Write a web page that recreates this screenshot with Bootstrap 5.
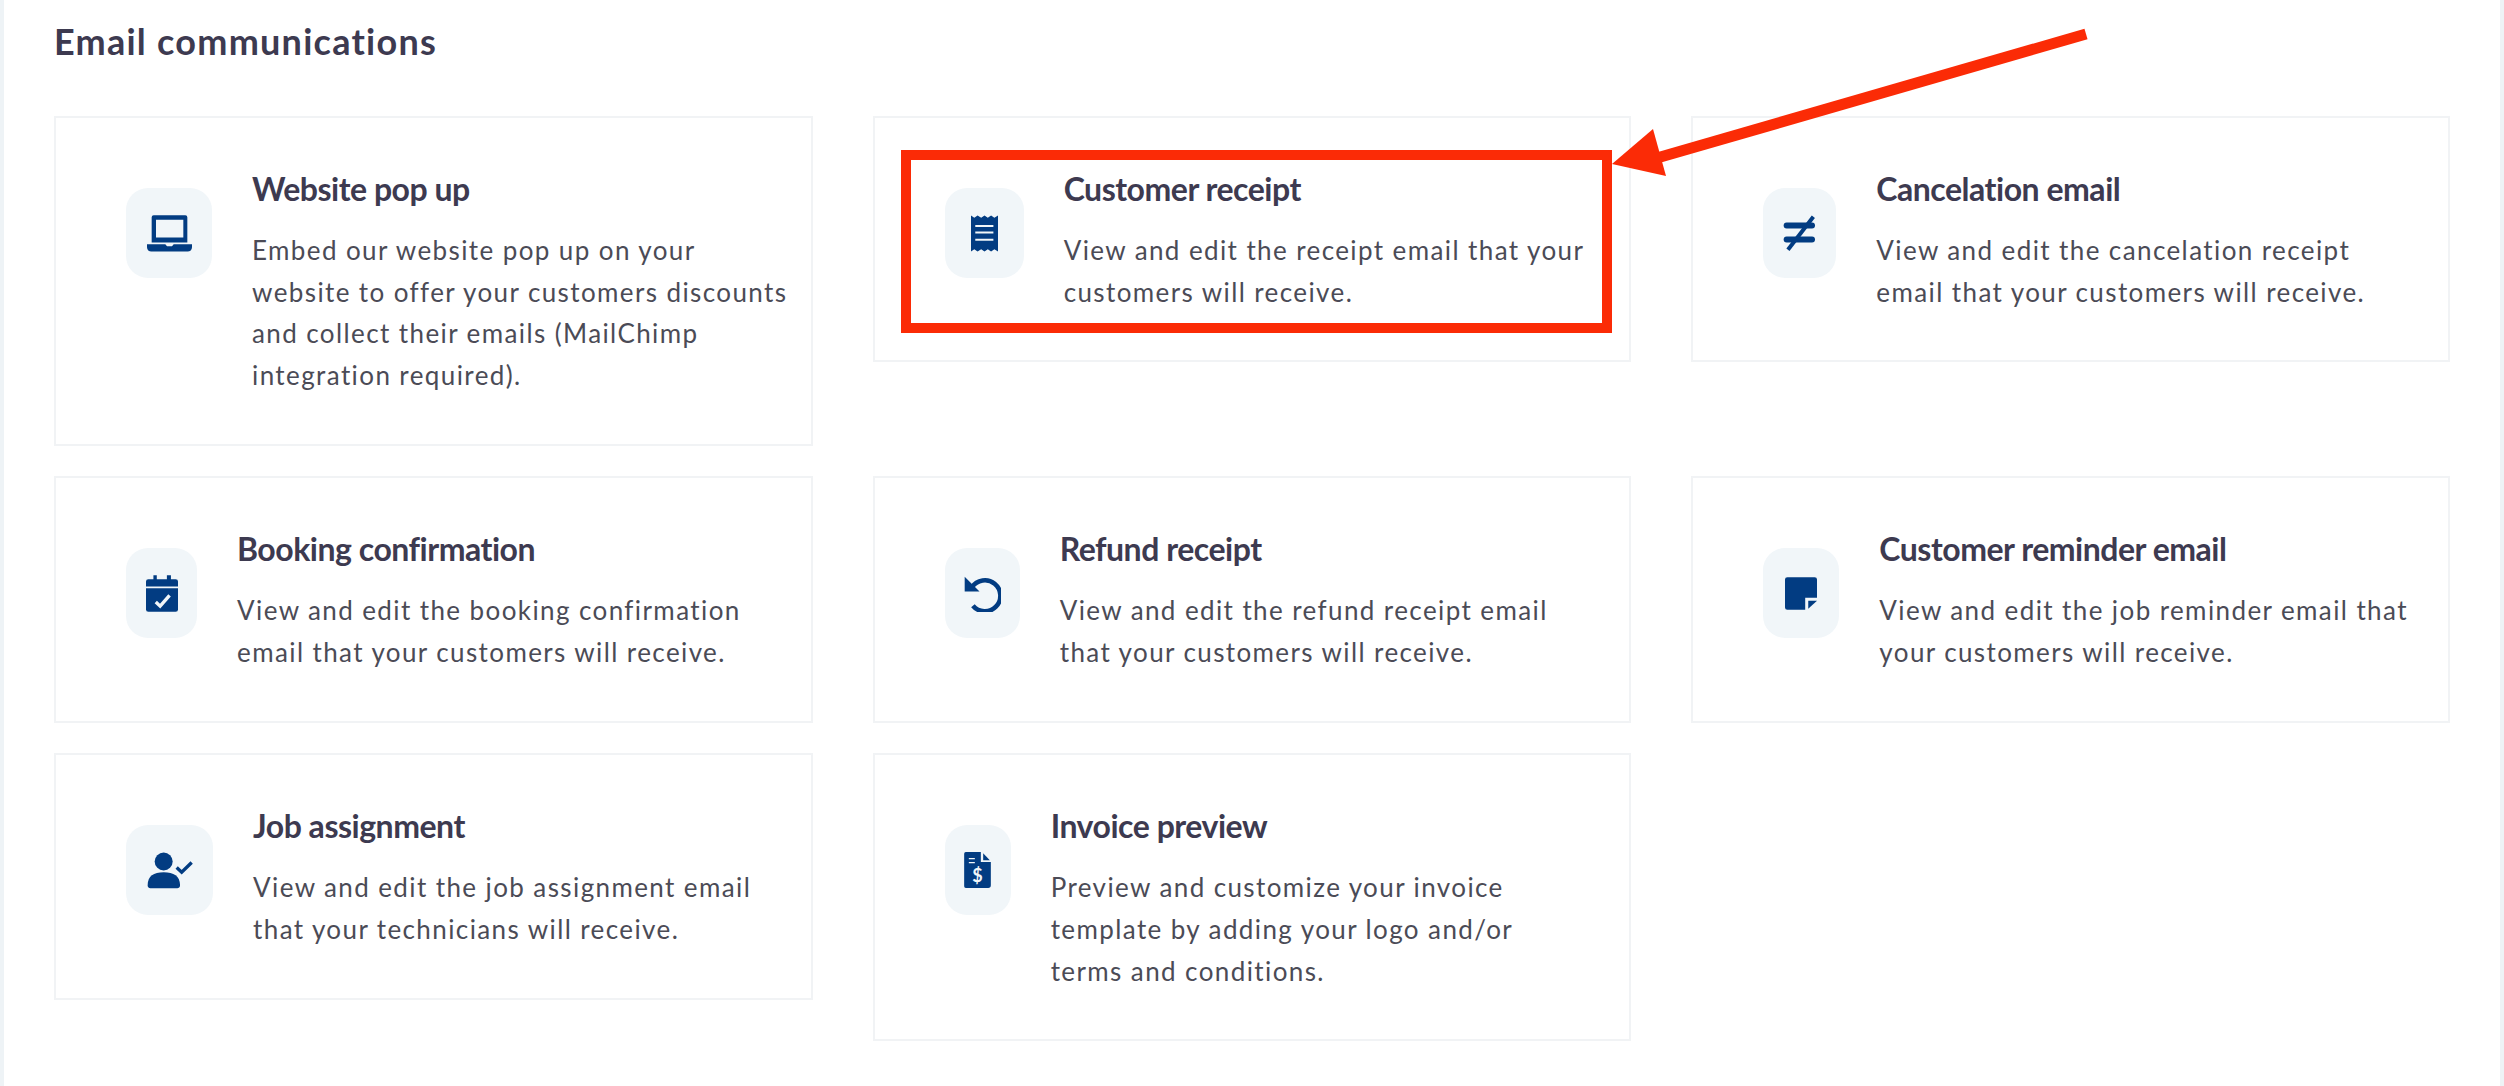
<!DOCTYPE html>
<html lang="en">
<head>
<meta charset="utf-8">
<title>Email communications</title>
<link href="https://cdn.jsdelivr.net/npm/bootstrap@5.3.0/dist/css/bootstrap.min.css" rel="stylesheet">
<style>
html,body{height:100%;overflow:hidden;background:#fff}
body{font-family:"Lato","Liberation Sans",sans-serif}
.page-shell{position:relative;height:1086px;border-left:4px solid #eef3f6;border-right:4px solid #eef3f6;padding:0 50px}
.page-heading{font-family:"Lato",sans-serif;font-size:36px;font-weight:700;line-height:44px;letter-spacing:1.25px;color:#3d3a50;margin:0;padding-top:19px;height:116px}
.card-grid{--bs-gutter-x:60px;--bs-gutter-y:30.5px}
.mail-card{border:2px solid #f1f3f5;border-radius:0;background:#fff}
.mail-body{padding:49px 12px 47px 46px}
.tile{flex:none;height:90px;margin:21px 40px 0 24px;border-radius:22px;background:#f1f6f9}
.w66{width:66px}.w71{width:71px}.w73{width:73px}.w75{width:75px}.w76{width:76px}.w79{width:79px}.w86{width:86px}.w87{width:87px}
.mail-title{font-size:32px;font-weight:700;line-height:44px;letter-spacing:-.48px;color:#3d3a50;margin:0 0 19px;white-space:nowrap}
.mail-text{font-size:26px;line-height:41.7px;letter-spacing:1.4px;color:#4b4b56;margin:0;white-space:nowrap}
.ico-navy{fill:#023c82}
.overlay{position:absolute;left:-4px;top:0;pointer-events:none}
</style>
</head>
<body>
<main class="page-shell">
  <h1 class="page-heading">Email communications</h1>
  <div class="row card-grid align-items-start">
    <div class="col-4"><div class="card mail-card"><div class="card-body mail-body d-flex">
      <div class="tile w86 d-flex align-items-center justify-content-center">
        <svg width="45" height="37" viewBox="0 0 135 110" class="ico-navy"><path fill-rule="evenodd" d="M20 0h95a6 6 0 0 1 6 6v76H14V6a6 6 0 0 1 6-6zM27 14v53h82V14z"/><path d="M0 87h55l5 6h15l5-6h55v9c0 8-6 13-13 13H13C6 109 0 104 0 96z"/></svg>
      </div>
      <div><h5 class="mail-title">Website pop up</h5>
      <p class="mail-text">Embed our website pop up on your<br>website to offer your customers discounts<br>and collect their emails (MailChimp<br>integration required).</p></div>
    </div></div></div>
    <div class="col-4"><div class="card mail-card"><div class="card-body mail-body d-flex">
      <div class="tile w79 d-flex align-items-center justify-content-center">
        <svg width="27" height="37" viewBox="0 0 82 110" class="ico-navy"><path fill-rule="evenodd" d="M0 0L10 7 20 0 31 7 41 0 51 7 61 0 71 7 82 0V110L71 103 61 110 51 103 41 110 31 103 20 110 10 103 0 110zM13 29v6H68V29zM13 49v6H68V49zM13 71v6H68V71z"/></svg>
      </div>
      <div><h5 class="mail-title">Customer receipt</h5>
      <p class="mail-text">View and edit the receipt email that your<br>customers will receive.</p></div>
    </div></div></div>
    <div class="col-4"><div class="card mail-card"><div class="card-body mail-body d-flex">
      <div class="tile w73 d-flex align-items-center justify-content-center">
        <svg width="33" height="37" viewBox="0 0 100 110" class="ico-navy"><rect x="2" y="22" width="95" height="18" rx="9"/><rect x="2" y="64" width="95" height="18" rx="9"/><path d="M92 4L15 104" stroke="#023c82" stroke-width="12" stroke-linecap="butt"/></svg>
      </div>
      <div><h5 class="mail-title">Cancelation email</h5>
      <p class="mail-text">View and edit the cancelation receipt<br>email that your customers will receive.</p></div>
    </div></div></div>

    <div class="col-4"><div class="card mail-card"><div class="card-body mail-body d-flex">
      <div class="tile w71 d-flex align-items-center justify-content-center">
        <svg width="32" height="37" viewBox="0 0 95 109" class="ico-navy"><path d="M22 0h10v12h30V0h12v12h14a7 7 0 0 1 7 7v15H0V19a7 7 0 0 1 7-7h15z"/><path fill-rule="evenodd" d="M0 39h95v63a7 7 0 0 1-7 7H7a7 7 0 0 1-7-7z"/><path d="M29 80l13 12 28-32" fill="none" stroke="#f1f6f9" stroke-width="10"/></svg>
      </div>
      <div><h5 class="mail-title">Booking confirmation</h5>
      <p class="mail-text">View and edit the booking confirmation<br>email that your customers will receive.</p></div>
    </div></div></div>
    <div class="col-4"><div class="card mail-card"><div class="card-body mail-body d-flex">
      <div class="tile w75 d-flex align-items-center justify-content-center">
        <svg width="38" height="37" viewBox="0 0 115 112" class="ico-navy"><path d="M27 37A47 47 0 1 1 30 93" fill="none" stroke="#023c82" stroke-width="14"/><path d="M5 5V50H50z"/></svg>
      </div>
      <div><h5 class="mail-title">Refund receipt</h5>
      <p class="mail-text">View and edit the refund receipt email<br>that your customers will receive.</p></div>
    </div></div></div>
    <div class="col-4"><div class="card mail-card"><div class="card-body mail-body d-flex">
      <div class="tile w76 d-flex align-items-center justify-content-center">
        <svg width="32" height="33" viewBox="0 0 95 97" class="ico-navy"><path d="M7 0H88a7 7 0 0 1 7 7V61H60V97H7a7 7 0 0 1-7-7V7a7 7 0 0 1 7-7z"/><path d="M69 70H95L69 94z"/></svg>
      </div>
      <div><h5 class="mail-title">Customer reminder email</h5>
      <p class="mail-text">View and edit the job reminder email that<br>your customers will receive.</p></div>
    </div></div></div>

    <div class="col-4"><div class="card mail-card"><div class="card-body mail-body d-flex">
      <div class="tile w87 d-flex align-items-center justify-content-center">
        <svg width="46" height="37" viewBox="0 0 138 110" class="ico-navy"><circle cx="50" cy="28" r="27"/><path d="M2 98C2 72 20 60 50 60s49 12 49 38v2c0 6-4 8-8 8H10c-4 0-8-2-8-8z"/><path d="M89 46l15 14 30-29" fill="none" stroke="#023c82" stroke-width="10"/></svg>
      </div>
      <div><h5 class="mail-title">Job assignment</h5>
      <p class="mail-text">View and edit the job assignment email<br>that your technicians will receive.</p></div>
    </div></div></div>
    <div class="col-4"><div class="card mail-card"><div class="card-body mail-body d-flex">
      <div class="tile w66 d-flex align-items-center justify-content-center">
        <svg width="27" height="36" viewBox="0 0 80 108" class="ico-navy"><path d="M5 0H50V30H80V100a8 8 0 0 1-8 8H5a5 5 0 0 1-5-5V5a5 5 0 0 1 5-5z"/><path d="M57 4L77 25H57z"/><path d="M14 20H32M14 32H32" stroke="#f1f6f9" stroke-width="4"/><text x="40" y="90" text-anchor="middle" font-family="Lato,sans-serif" font-weight="700" font-size="54" fill="#f1f6f9">$</text></svg>
      </div>
      <div><h5 class="mail-title">Invoice preview</h5>
      <p class="mail-text">Preview and customize your invoice<br>template by adding your logo and/or<br>terms and conditions.</p></div>
    </div></div></div>
  </div>
  <svg class="overlay" width="2504" height="1086" viewBox="0 0 2504 1086">
    <rect x="906" y="155" width="701" height="173" fill="none" stroke="#fb2b06" stroke-width="10"/>
    <path d="M2086 34L1650 160" stroke="#fb2b06" stroke-width="11" fill="none"/>
    <path d="M1612 164L1653 129 1666 176z" fill="#fb2b06"/>
  </svg>
</main>
<script src="https://cdn.jsdelivr.net/npm/bootstrap@5.3.0/dist/js/bootstrap.bundle.min.js"></script>
</body>
</html>
